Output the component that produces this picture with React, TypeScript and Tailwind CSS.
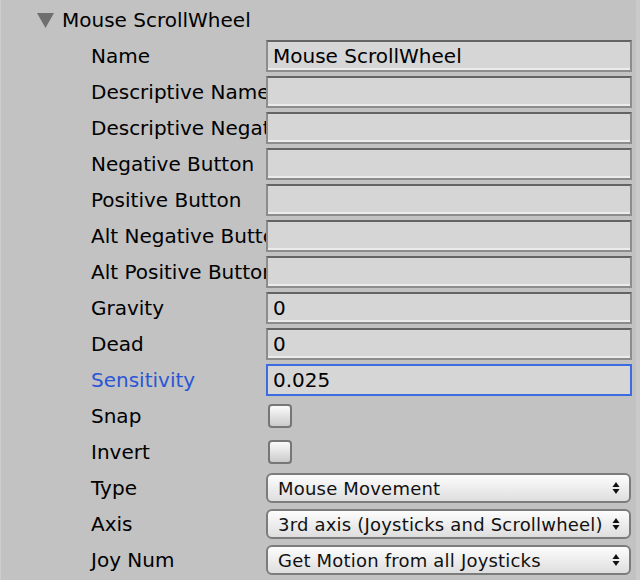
import React from "react";

const font = { fontFamily: '"DejaVu Sans", "Liberation Sans", sans-serif' };

function TextField({ value, focused }: { value?: string; focused?: boolean }) {
    return (
        <div
            className={
                focused
                    ? "h-[32px] w-[366px] border-2 border-[#3d6be0] bg-[#d6d6d6] flex items-center pl-[5px] text-[20px] text-black"
                    : "h-[32px] w-[366px] border-2 border-[#8c8c8c] border-t-[#646464] bg-[#d6d6d6] shadow-[inset_0_-2px_0_#ececec] flex items-center pl-[5px] text-[20px] text-black"
            }
        >
            {value}
        </div>
    );
}

function Checkbox() {
    return (
        <div className="ml-[2px] h-[24px] w-[24px] rounded-[4px] border-2 border-[#767676] bg-gradient-to-b from-[#fbfbfb] to-[#cbcbcb]" />
    );
}

function Popup({ value }: { value: string }) {
    return (
        <div className="h-[30px] w-[365px] rounded-[6px] border-2 border-[#7c7c7c] bg-gradient-to-b from-[#fdfdfd] to-[#dedede] flex items-center justify-between pl-[10px] pr-[9px] text-[18px] text-[#111] tracking-[0.2px]">
            <span className="whitespace-nowrap">{value}</span>
            <svg width="8" height="14" viewBox="0 0 8 14">
                <path d="M4 1 L7.5 6 L0.5 6 Z" fill="#111" />
                <path d="M4 13 L7.5 8 L0.5 8 Z" fill="#111" />
            </svg>
        </div>
    );
}

type Row = {
    label: string;
    kind: "text" | "check" | "popup";
    value?: string;
    focused?: boolean;
};

const rows: Row[] = [
    { label: "Name", kind: "text", value: "Mouse ScrollWheel" },
    { label: "Descriptive Name", kind: "text" },
    { label: "Descriptive Negative Name", kind: "text" },
    { label: "Negative Button", kind: "text" },
    { label: "Positive Button", kind: "text" },
    { label: "Alt Negative Button", kind: "text" },
    { label: "Alt Positive Button", kind: "text" },
    { label: "Gravity", kind: "text", value: "0" },
    { label: "Dead", kind: "text", value: "0" },
    { label: "Sensitivity", kind: "text", value: "0.025", focused: true },
    { label: "Snap", kind: "check" },
    { label: "Invert", kind: "check" },
    { label: "Type", kind: "popup", value: "Mouse Movement" },
    { label: "Axis", kind: "popup", value: "3rd axis (Joysticks and Scrollwheel)" },
    { label: "Joy Num", kind: "popup", value: "Get Motion from all Joysticks" },
];

export default function App() {
    return (
        <div
            className="w-[640px] h-[580px] overflow-hidden bg-[#c2c2c2] border-l border-l-[#cdcdcd] border-r-4 border-r-[#cacaca] pt-[2px]"
            style={font}
        >
            <div className="h-[36px] flex items-center pl-[36px] gap-[8px] text-[20px] text-black">
                <svg width="17" height="15" viewBox="0 0 17 15">
                    <path d="M0 0 L17 0 L8.5 15 Z" fill="#6f6f6f" />
                </svg>
                <span>Mouse ScrollWheel</span>
            </div>

            {rows.map((row) => (
                <div key={row.label} className="h-[36px] flex items-center">
                    <div
                        className={
                            row.focused
                                ? "w-[265px] pl-[90px] overflow-hidden whitespace-nowrap text-[20px] text-[#2a56d6]"
                                : "w-[265px] pl-[90px] overflow-hidden whitespace-nowrap text-[20px] text-black"
                        }
                    >
                        {row.label}
                    </div>
                    {row.kind === "text" && (
                        <TextField value={row.value} focused={row.focused} />
                    )}
                    {row.kind === "check" && <Checkbox />}
                    {row.kind === "popup" && <Popup value={row.value || ""} />}
                </div>
            ))}
        </div>
    );
}
